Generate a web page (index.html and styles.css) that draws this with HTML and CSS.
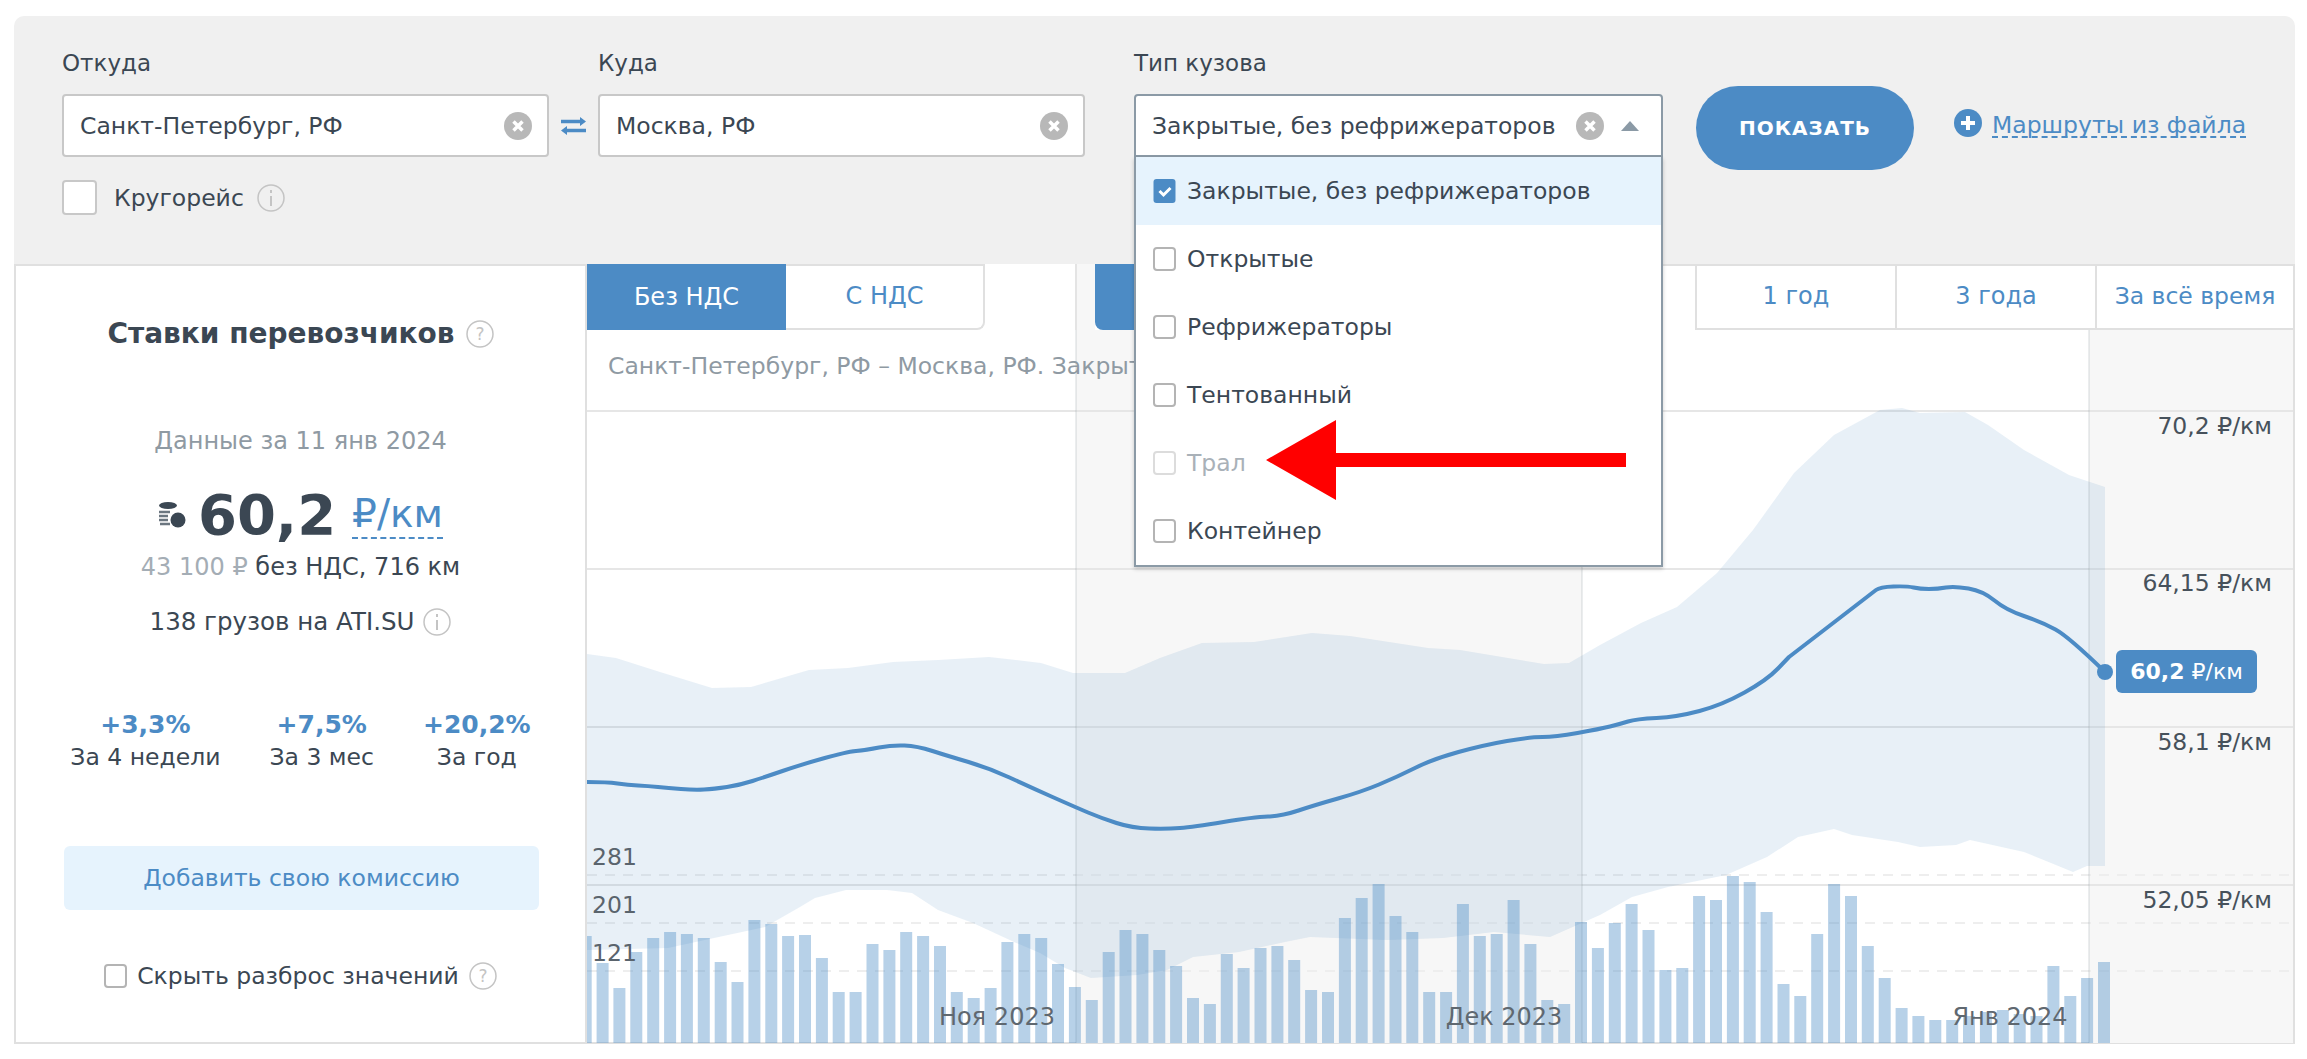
FILE: index.html
```html
<!DOCTYPE html>
<html lang="ru">

<head>
    <meta charset="UTF-8">
    <title>Ставки перевозчиков</title>
    <link rel="stylesheet" href="styles.css">
</head>

<body>
    <div class="page">
        <div class="filters">
            <div class="filter-row">
                <div class="field">
                    <div class="field-label">Откуда</div>
                    <div class="input">
                        <span>Санкт-Петербург, РФ</span>
                        <svg class="clear" viewBox="0 0 28 28"><circle cx="14" cy="14" r="14"/><path d="M9.5 9.5l9 9M18.500 9.500l-9 9"/></svg>
                    </div>
                </div>
                <svg class="swap" viewBox="0 0 25 18"><path class="swap-lines" d="M0 4.500H20M25 13.500H5"/><path class="swap-heads" d="M19 0l6 4.500-6 4.500zM6 9l-6 4.500 6 4.500z"/></svg>
                <div class="field">
                    <div class="field-label">Куда</div>
                    <div class="input">
                        <span>Москва, РФ</span>
                        <svg class="clear" viewBox="0 0 28 28"><circle cx="14" cy="14" r="14"/><path d="M9.5 9.5l9 9M18.500 9.500l-9 9"/></svg>
                    </div>
                </div>
                <div class="field field-select">
                    <div class="field-label">Тип кузова</div>
                    <div class="input input-open">
                        <span>Закрытые, без рефрижераторов</span>
                        <svg class="clear" viewBox="0 0 28 28"><circle cx="14" cy="14" r="14"/><path d="M9.5 9.5l9 9M18.500 9.500l-9 9"/></svg>
                        <svg class="caret" viewBox="0 0 18 10"><path d="M9 0l9 10H0z"/></svg>
                    </div>
                    <div class="menu">
                        <div class="menu-item selected">
                            <svg class="check" viewBox="0 0 22 24"><rect width="22" height="24" rx="3"/><path d="M6 12l4 4 7-7"/></svg>
                            Закрытые, без рефрижераторов
                        </div>
                        <div class="menu-item"><span class="box"></span>Открытые</div>
                        <div class="menu-item"><span class="box"></span>Рефрижераторы</div>
                        <div class="menu-item"><span class="box"></span>Тентованный</div>
                        <div class="menu-item disabled"><span class="box"></span>Трал</div>
                        <div class="menu-item"><span class="box"></span>Контейнер</div>
                    </div>
                </div>
                <button class="show-btn">ПОКАЗАТЬ</button>
                <div class="file-link">
                    <svg class="plus" viewBox="0 0 28 28"><circle cx="14" cy="14" r="14"/><path d="M14 7v14M7 14h14"/></svg>
                    <a>Маршруты из файла</a>
                </div>
            </div>
            <div class="round-trip">
                <span class="box-big"></span>
                <span>Кругорейс</span>
                <svg class="hint" viewBox="0 0 28 28"><circle cx="14" cy="14" r="13"/><path d="M14 12v10M14 6v3"/></svg>
            </div>
        </div>

        <div class="main">
            <div class="side">
                <div class="side-title">
                    Ставки перевозчиков
                    <svg class="hint" viewBox="0 0 28 28"><circle cx="14" cy="14" r="13"/><text x="14" y="20" class="hint-q">?</text></svg>
                </div>
                <div class="side-date">Данные за 11 янв 2024</div>
                <div class="price">
                    <svg class="coins" viewBox="0 0 28 26"><ellipse cx="10" cy="3.500" rx="9" ry="3.500"/><path class="coin-rows" d="M1 10h11M1 14h9M1 18h9M2 22h10"/><circle cx="20" cy="18" r="7.500"/></svg>
                    <span class="price-value">60,2</span>
                    <span class="price-unit">₽/км</span>
                </div>
                <div class="price-note"><span class="muted">43 100 ₽</span> без НДС, 716 км</div>
                <div class="loads">
                    138 грузов на ATI.SU
                    <svg class="hint" viewBox="0 0 28 28"><circle cx="14" cy="14" r="13"/><path d="M14 12v10M14 6v3"/></svg>
                </div>
                <div class="stats">
                    <div class="stat"><div class="stat-value">+3,3%</div><div>За 4 недели</div></div>
                    <div class="stat"><div class="stat-value">+7,5%</div><div>За 3 мес</div></div>
                    <div class="stat"><div class="stat-value">+20,2%</div><div>За год</div></div>
                </div>
                <div class="fee-btn">Добавить свою комиссию</div>
                <div class="hide-range">
                    <span class="box"></span>
                    Скрыть разброс значений
                    <svg class="hint" viewBox="0 0 28 28"><circle cx="14" cy="14" r="13"/><text x="14" y="20" class="hint-q">?</text></svg>
                </div>
            </div>

            <div class="chart-col">
                <div class="tabs">
                    <div class="tab active">Без НДС</div>
                    <div class="tab tab-last">С НДС</div>
                    <div class="tab-gap"></div>
                    <div class="tab active period-first"></div>
                    <div class="tab-hidden"></div>
                    <div class="tab period">1 год</div>
                    <div class="tab period">3 года</div>
                    <div class="tab period period-end">За всё время</div>
                </div>
                <div class="chart">
                    <div class="chart-title">Санкт-Петербург, РФ – Москва, РФ. Закрытые, без рефрижераторов</div>
                    <svg class="plot" viewBox="587 330 1706 713">
                        <path class="band" d="M1076 330h506v713h-506zM2089 330h204v713h-204z"/>
                        <path class="grid" d="M587 411H2293M587 569H2293M587 727H2293M587 885H2293"/>
                        <path class="grid-dash" d="M587 875H2293M587 923H2293M587 971H2293"/>
                        <path class="area" d="M587 654L616 658 660 672 712 688 751 687 809 670 848 668 893 662 938 660 989 657 1041 663 1073 673 1125 673 1160 658 1202 643 1254 642 1312 633 1350 636 1428 648 1460 650 1544 664 1569 663 1600 645 1641 623 1677 607 1717 573 1753 530 1794 473 1834 435 1880 410 1902 408 1920 413 1965 412 1988 425 2024 450 2069 475 2105 487V866H2087L2073 872 2051 863 2024 852 1970 840 1956 845 1920 847 1898 842 1852 835 1834 829 1798 837 1767 857 1726 875 1668 887 1632 897 1600 915 1550 937 1494 932 1443 938 1387 940 1310 937 1285 942 1239 952 1193 957 1167 970 1137 975 1091 978 1065 968 1040 953 1014 942 973 923 938 910 912 893 887 890 846 890 815 898 800 907 765 927 714 938 668 948 587 950Z"/>
                        <path class="vline" d="M1076 330V1043M1582 330V1043M2089 330V1043"/>
                        <path class="bars" d="M579.7 936h12V1043h-12zM596.6 963h12V1043h-12zM613.4 988h12V1043h-12zM630.3 952h12V1043h-12zM647.2 938h12V1043h-12zM664.1 932h12V1043h-12zM680.9 934h12V1043h-12zM697.8 938h12V1043h-12zM714.7 962h12V1043h-12zM731.5 982h12V1043h-12zM748.4 920h12V1043h-12zM765.3 924h12V1043h-12zM782.1 936h12V1043h-12zM799 935h12V1043h-12zM815.9 958h12V1043h-12zM832.7 992h12V1043h-12zM849.6 992h12V1043h-12zM866.5 944h12V1043h-12zM883.4 950h12V1043h-12zM900.2 932h12V1043h-12zM917.1 936h12V1043h-12zM934 946h12V1043h-12zM950.8 992h12V1043h-12zM967.7 998h12V1043h-12zM984.6 988h12V1043h-12zM1001.4 942h12V1043h-12zM1018.3 934h12V1043h-12zM1035.2 938h12V1043h-12zM1052 964h12V1043h-12zM1068.9 987h12V1043h-12zM1085.8 1000h12V1043h-12zM1102.7 952h12V1043h-12zM1119.5 930h12V1043h-12zM1136.4 934h12V1043h-12zM1153.3 950h12V1043h-12zM1170.1 966h12V1043h-12zM1187 998h12V1043h-12zM1203.9 1004h12V1043h-12zM1220.8 954h12V1043h-12zM1237.6 968h12V1043h-12zM1254.5 948h12V1043h-12zM1271.4 946h12V1043h-12zM1288.2 960h12V1043h-12zM1305.1 990h12V1043h-12zM1322 992h12V1043h-12zM1338.9 918h12V1043h-12zM1355.7 898h12V1043h-12zM1372.6 884h12V1043h-12zM1389.5 916h12V1043h-12zM1406.3 932h12V1043h-12zM1423.2 992h12V1043h-12zM1440.1 992h12V1043h-12zM1456.9 904h12V1043h-12zM1473.8 936h12V1043h-12zM1490.7 934h12V1043h-12zM1507.6 900h12V1043h-12zM1524.4 944h12V1043h-12zM1541.3 1000h12V1043h-12zM1558.2 1004h12V1043h-12zM1575 922h12V1043h-12zM1591.9 948h12V1043h-12zM1608.8 923h12V1043h-12zM1625.6 904h12V1043h-12zM1642.5 930h12V1043h-12zM1659.4 970h12V1043h-12zM1676.3 968h12V1043h-12zM1693.1 896h12V1043h-12zM1710 900h12V1043h-12zM1726.9 876h12V1043h-12zM1743.7 882h12V1043h-12zM1760.6 912h12V1043h-12zM1777.5 984h12V1043h-12zM1794.3 996h12V1043h-12zM1811.2 934h12V1043h-12zM1828.1 884h12V1043h-12zM1845 896h12V1043h-12zM1861.8 946h12V1043h-12zM1878.7 978h12V1043h-12zM1895.6 1008h12V1043h-12zM1912.4 1016h12V1043h-12zM1929.3 1020h12V1043h-12zM1946.2 1020h12V1043h-12zM1963 1016h12V1043h-12zM1979.9 1012h12V1043h-12zM1996.8 1010h12V1043h-12zM2013.7 1014h12V1043h-12zM2030.5 1016h12V1043h-12zM2047.4 966h12V1043h-12zM2064.3 996h12V1043h-12zM2081.1 978h12V1043h-12zM2098 962h12V1043h-12z"/>
                        <path class="line" d="M587 782Q607 782 617.5 783.5Q628 785 638 785.5Q648 786 658 787Q668 788 681 789Q694 790 704 789.5Q714 789 727 787Q740 785 752.5 781Q765 777 782.5 771Q800 765 823 758.5Q846 752 856 751Q866 750 879 747.5Q892 745 904.5 745.5Q917 746 932.5 751Q948 756 968.5 762Q989 768 1009.5 777.5Q1030 787 1052.5 797Q1075 807 1088 812.5Q1101 818 1116.5 823Q1132 828 1149.5 828.5Q1167 829 1180 828Q1193 827 1223.5 822Q1254 817 1268 816.5Q1282 816 1298.5 810.5Q1315 805 1338 798.5Q1361 792 1379 784.5Q1397 777 1415 768Q1433 759 1458.5 752Q1484 745 1507 741Q1530 737 1542.5 737Q1555 737 1577.5 733Q1600 729 1610 726.5Q1620 724 1628 721.5Q1636 719 1656.5 718Q1677 717 1699.5 711Q1722 705 1744.5 692.5Q1767 680 1778 668.5L1789 657 1876 590Q1880 587 1893.5 586.5Q1907 586 1913.5 587.5Q1920 589 1929 589Q1938 589 1946 587.5Q1954 586 1968.5 588.5Q1983 591 1994.5 600.5Q2006 610 2024 616Q2042 622 2055.5 629.5Q2069 637 2105 672"/>
                        <circle class="dot" cx="2105" cy="672" r="8"/>
                        <text class="tick-left" x="592" y="865">281</text>
                        <text class="tick-left" x="592" y="913">201</text>
                        <text class="tick-left" x="592" y="961">121</text>
                        <text class="tick-month" x="997" y="1025">Ноя 2023</text>
                        <text class="tick-month" x="1504" y="1025">Дек 2023</text>
                        <text class="tick-month" x="2010" y="1025">Янв 2024</text>
                        <text class="tick-right" x="2272" y="434">70,2 ₽/км</text>
                        <text class="tick-right" x="2272" y="591">64,15 ₽/км</text>
                        <text class="tick-right" x="2272" y="750">58,1 ₽/км</text>
                        <text class="tick-right" x="2272" y="908">52,05 ₽/км</text>
                    </svg>
                    <div class="badge"><b>60,2</b> ₽/км</div>
                </div>
            </div>
        </div>

        <svg class="arrow" viewBox="0 0 360 80"><path d="M0 40L70 0V33H360V47H70V80Z"/></svg>
    </div>
</body>

</html>
```
FILE: styles.css
```css
* {
    box-sizing: border-box;
}

body {
    margin: 0;
    background: #fff;
    font-family: "DejaVu Sans", Verdana, sans-serif;
    font-size: 23.5px;
    line-height: 30px;
    color: #3b4753;
}

.page {
    position: relative;
    width: 2307px;
    height: 1059px;
    padding: 16px 12px 0 14px;
    overflow: hidden;
}

/* top filters */
.filters {
    height: 248px;
    padding: 32px 0 0 48px;
    background: #f0f0f0;
    border-radius: 10px 10px 0 0;
}

.filter-row {
    display: flex;
    align-items: flex-start;
    height: 109px;
}

.field {
    position: relative;
    width: 487px;
}

.field-select {
    width: 529px;
    margin-left: 49px;
}

.field-label {
    margin-bottom: 16px;
    font-size: 23px;
}

.input {
    display: flex;
    align-items: center;
    height: 63px;
    padding: 0 15px 0 16px;
    background: #fff;
    border: 2px solid #c8c8c8;
    border-radius: 4px;
}

.input span {
    flex: 1;
    white-space: nowrap;
}

.input-open {
    padding-right: 22px;
    border-color: #8b9aa6;
    border-radius: 4px 4px 0 0;
}

.clear {
    width: 28px;
    height: 28px;
    flex: none;
}

.clear circle {
    fill: #b8b8b8;
}

.clear path {
    stroke: #fff;
    stroke-width: 3.5;
    fill: none;
}

.swap {
    width: 25px;
    height: 18px;
    margin: 69px 12px 0 12px;
    flex: none;
}

.swap-lines {
    stroke: #4c8bc5;
    stroke-width: 3.5;
    fill: none;
}

.swap-heads {
    fill: #4c8bc5;
}

.caret {
    width: 18px;
    height: 10px;
    margin-left: 17px;
    flex: none;
}

.caret path {
    fill: #8b9aa6;
}

.menu {
    position: absolute;
    top: 109px;
    left: 0;
    z-index: 5;
    width: 529px;
    height: 410px;
    background: #fff;
    border: 2px solid #8b9aa6;
    border-top: 0;
    box-shadow: 0 2px 4px rgba(0, 0, 0, 0.2);
}

.menu-item {
    display: flex;
    align-items: center;
    gap: 11px;
    height: 68px;
    padding: 0 0 0 17px;
    white-space: nowrap;
}

.menu-item.selected {
    background: #e6f3fd;
}

.menu-item.disabled {
    color: #a9b1b8;
}

.menu-item.disabled .box {
    border-color: #dcdcdc;
}

.check {
    width: 23px;
    height: 24px;
    flex: none;
}

.check rect {
    fill: #4c8bc5;
}

.check path {
    stroke: #fff;
    stroke-width: 3;
    fill: none;
}

.box {
    display: inline-block;
    width: 23px;
    height: 24px;
    flex: none;
    background: #fff;
    border: 2px solid #b4b4b4;
    border-radius: 4px;
}

.show-btn {
    width: 218px;
    height: 84px;
    margin: 38px 0 0 33px;
    flex: none;
    border: 0;
    border-radius: 42px;
    background: #4c8bc5;
    color: #fff;
    font-family: inherit;
    font-size: 20px;
    font-weight: 700;
    letter-spacing: 1px;
}

.file-link {
    display: flex;
    align-items: center;
    gap: 10px;
    margin: 60px 0 0 40px;
    white-space: nowrap;
    color: #4c8bc5;
}

.file-link a {
    padding-top: 6px;
    border-bottom: 2px dashed #4c8bc5;
    line-height: 22px;
}

.plus {
    width: 28px;
    height: 28px;
}

.plus circle {
    fill: #4c8bc5;
}

.plus path {
    stroke: #fff;
    stroke-width: 4;
}

.round-trip {
    display: flex;
    align-items: center;
    gap: 17px;
    margin-top: 23px;
}

.round-trip .hint {
    margin-left: -4px;
}

.box-big {
    width: 35px;
    height: 35px;
    background: #fff;
    border: 2px solid #c8c8c8;
    border-radius: 4px;
}

.hint {
    width: 28px;
    height: 28px;
    flex: none;
}

.hint circle {
    fill: none;
    stroke: #c4c4c4;
    stroke-width: 1.5;
}

.hint path {
    stroke: #c4c4c4;
    stroke-width: 2;
}

.hint-q {
    fill: #c4c4c4;
    font-size: 17px;
    font-weight: 400;
    text-anchor: middle;
}

/* main block */
.main {
    display: flex;
    height: 780px;
    border: 2px solid #e0e0e0;
}

.side {
    width: 571px;
    flex: none;
    padding-top: 53px;
    border-right: 2px solid #e0e0e0;
    text-align: center;
}

.side-title {
    display: flex;
    justify-content: center;
    align-items: center;
    gap: 11px;
    font-size: 28px;
    font-weight: 700;
}

.side-date {
    margin-top: 77px;
    font-size: 24px;
    color: #8f9aa3;
}

.price {
    display: flex;
    justify-content: center;
    align-items: center;
    height: 70px;
    margin-top: 24px;
}

.coins {
    width: 28px;
    height: 26px;
    margin-right: 12px;
}

.coins ellipse,
.coins circle {
    fill: #3b4753;
}

.coin-rows {
    stroke: #6b7680;
    stroke-width: 2.5;
    fill: none;
}

.price-value {
    font-size: 56px;
    font-weight: 700;
}

.price-unit {
    margin-left: 16px;
    font-size: 39px;
    line-height: 46px;
    color: #4c8bc5;
    border-bottom: 2px dashed #4c8bc5;
}

.price-note {
    margin-top: 2px;
    font-size: 24px;
}

.muted {
    color: #a4adb5;
}

.loads {
    display: flex;
    justify-content: center;
    align-items: center;
    gap: 9px;
    margin-top: 25px;
    font-size: 24.5px;
}

.stats {
    display: flex;
    justify-content: center;
    gap: 49px;
    margin-top: 73px;
}

.stat-value {
    margin-bottom: 2px;
    font-size: 25px;
    font-weight: 700;
    color: #4c8bc5;
}

.fee-btn {
    height: 64px;
    margin: 74px 46px 0 48px;
    background: #e6f3fd;
    border-radius: 6px;
    color: #4c8bc5;
    line-height: 64px;
}

.hide-range {
    display: flex;
    justify-content: center;
    align-items: center;
    gap: 10px;
    margin-top: 51px;
}

/* tabs and chart */
.chart-col {
    flex: 1;
    min-width: 0;
}

.tabs {
    display: flex;
    height: 66px;
    margin-top: -2px;
    font-size: 24px;
    color: #4c8bc5;
}

.tab {
    display: flex;
    justify-content: center;
    align-items: center;
    width: 199px;
    flex: none;
    border-bottom: 2px solid #e0e0e0;
}

.tab.active {
    background: #4c8bc5;
    border-bottom: 0;
    color: #fff;
}

.tab-last {
    border-right: 2px solid #e0e0e0;
    border-radius: 0 0 8px 0;
}

.tab-gap {
    width: 110px;
    flex: none;
    background: linear-gradient(to right, #fff 90px, #e4e4e4 90px, #e4e4e4 92px, #f7f7f7 92px);
}

.period-first {
    width: 200px;
    border-radius: 0 0 0 8px;
}

.tab-hidden {
    width: 400px;
    flex: none;
}

.period {
    width: 200px;
    border-left: 2px solid #e0e0e0;
}

.period-end {
    width: auto;
    flex: 1;
    font-size: 23.5px;
    white-space: nowrap;
}

.chart {
    position: relative;
    height: 713px;
}

.plot {
    display: block;
    width: 1706px;
    height: 713px;
}

.chart-title {
    position: absolute;
    top: 21px;
    left: 21px;
    z-index: 1;
    color: #8f9aa3;
    white-space: nowrap;
}

.band {
    fill: #f7f7f7;
}

.grid {
    stroke: #e6e6e6;
    stroke-width: 2;
    fill: none;
}

.grid-dash {
    stroke: #eeeeee;
    stroke-width: 2;
    stroke-dasharray: 10 8;
    fill: none;
}

.area {
    fill: rgba(76, 139, 197, 0.13);
}

.vline {
    stroke: rgba(130, 140, 150, 0.16);
    stroke-width: 2;
    fill: none;
}

.bars {
    fill: rgba(76, 139, 197, 0.4);
}

.line {
    stroke: #4c8bc5;
    stroke-width: 4;
    fill: none;
    stroke-linejoin: round;
}

.dot {
    fill: #4c8bc5;
}

.tick-left,
.tick-right,
.tick-month {
    font-size: 23.5px;
    fill: #5a646d;
}

.tick-right {
    text-anchor: end;
    fill: #46515b;
}

.tick-month {
    text-anchor: middle;
    font-size: 24px;
    fill: #5f6870;
}

.badge {
    position: absolute;
    top: 320px;
    left: 1529px;
    width: 141px;
    height: 43px;
    background: #4c8bc5;
    border-radius: 6px;
    color: #fff;
    font-size: 22px;
    line-height: 43px;
    text-align: center;
    white-space: nowrap;
}

.arrow {
    position: absolute;
    top: 420px;
    left: 1266px;
    z-index: 6;
    width: 360px;
    height: 80px;
}

.arrow path {
    fill: #ff0000;
}
```
